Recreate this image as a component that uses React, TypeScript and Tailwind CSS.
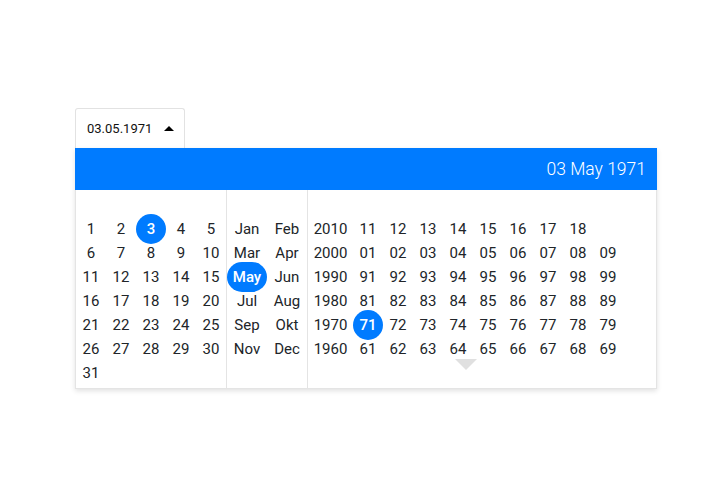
const days = Array.from({ length: 31 }, (_, i) => i + 1)
const months = ['Jan', 'Feb', 'Mar', 'Apr', 'May', 'Jun', 'Jul', 'Aug', 'Sep', 'Okt', 'Nov', 'Dec']
const decades = [
  { label: '2010', years: ['11', '12', '13', '14', '15', '16', '17', '18'] },
  { label: '2000', years: ['01', '02', '03', '04', '05', '06', '07', '08', '09'] },
  { label: '1990', years: ['91', '92', '93', '94', '95', '96', '97', '98', '99'] },
  { label: '1980', years: ['81', '82', '83', '84', '85', '86', '87', '88', '89'] },
  { label: '1970', years: ['71', '72', '73', '74', '75', '76', '77', '78', '79'] },
  { label: '1960', years: ['61', '62', '63', '64', '65', '66', '67', '68', '69'] },
]

function Cell({ text, active, width }: { text: string; active?: boolean; width: string }) {
  return (
    <div className={`${width} h-6 flex items-center justify-center`}>
      {active ? (
        <span className={`${text.length > 2 ? 'w-10' : 'w-[30px]'} h-[30px] shrink-0 rounded-full bg-[#007bff] text-white font-medium flex items-center justify-center`}>
          {text}
        </span>
      ) : (
        <span>{text}</span>
      )}
    </div>
  )
}

export default function App() {
  return (
    <div className="w-[720px] h-[500px] bg-white pt-[108px] pl-[75px] font-['Roboto',sans-serif] text-[#212529]">
      <div className="w-[110px] h-10 border border-b-0 border-[#e2e2e2] rounded-t-[3px] flex items-center pl-[11px] pr-[10px] justify-between text-[13px] text-[#111]">
        <span>03.05.1971</span>
        <span className="w-0 h-0 border-x-[5px] border-x-transparent border-b-[5px] border-b-black mb-[1px]" />
      </div>
      <div className="w-[582px] shadow-[0_2px_5px_rgba(0,0,0,0.12)]">
        <div className="h-[42px] bg-[#007bff] flex items-center justify-end pr-[11px] text-white text-[17.5px] font-light">
          03 May 1971
        </div>
        <div className="flex border border-t-0 border-[#e4e4e4] h-[199px] text-[15px]">
          <div className="w-[150px] pt-[27px]">
            <div className="grid grid-cols-5">
              {days.map((d) => (
                <Cell key={d} text={String(d)} active={d === 3} width="w-[30px]" />
              ))}
            </div>
          </div>
          <div className="w-[81px] border-l border-[#e4e4e4] pt-[27px]">
            <div className="grid grid-cols-2 w-20">
              {months.map((m) => (
                <Cell key={m} text={m} active={m === 'May'} width="w-10" />
              ))}
            </div>
          </div>
          <div className="flex-1 border-l border-[#e4e4e4] pt-[27px]">
            {decades.map((row) => (
              <div key={row.label} className="flex">
                <Cell text={row.label} width="w-[45px]" />
                {row.years.map((y) => (
                  <Cell key={y} text={y} active={y === '71'} width="w-[30px]" />
                ))}
              </div>
            ))}
            <div className="ml-[147px] -mt-[2px] w-0 h-0 border-x-[11px] border-x-transparent border-t-[11px] border-t-[#e0e0e0]" />
          </div>
        </div>
      </div>
    </div>
  )
}
